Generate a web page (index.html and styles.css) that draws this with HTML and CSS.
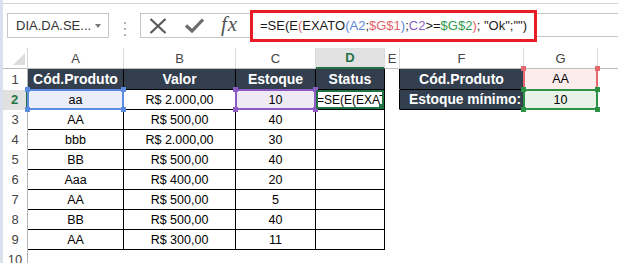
FILE: index.html
```html
<!DOCTYPE html>
<html lang="pt-BR">
<head>
    <meta charset="UTF-8">
    <title>Planilha - SE(E(EXATO))</title>
    <link rel="stylesheet" href="styles.css">
</head>
<body>
    <div class="window">
        <div class="top-rule"></div>

        <!-- Formula bar -->
        <div class="formula-bar">
            <div class="name-box"><span>DIA.DA.SE...</span><span class="caret"></span></div>
            <div class="grip"><i></i><i></i><i></i></div>
            <div class="fx-buttons">
                <svg class="icon-cancel" width="18" height="16" viewBox="0 0 18 16">
                    <path d="M1.5 1 L16.5 15 M16.5 1 L1.5 15" stroke="#595959" stroke-width="2.2" fill="none"/>
                </svg>
                <svg class="icon-enter" width="19" height="15" viewBox="0 0 19 15">
                    <path d="M1 7.5 L7 13 L18 1.5" stroke="#6b6b6b" stroke-width="3.2" fill="none"/>
                </svg>
                <span class="fx">fx</span>
            </div>
            <div class="formula-input">=SE(E<span class="f-red">(</span>EXATO<span class="f-blue">(A2</span>;<span class="f-red">$G$1</span><span class="f-blue">)</span>;<span class="f-purple">C2</span>&gt;=<span class="f-green">$G$2</span><span class="f-red">)</span>; "Ok";"")</div>
            <div class="formula-rest"></div>
        </div>

        <!-- Sheet -->
        <div class="sheet">
            <div class="c corner"></div>
            <div class="c ch">A</div>
            <div class="c ch">B</div>
            <div class="c ch">C</div>
            <div class="c ch ch-active">D</div>
            <div class="c ch">E</div>
            <div class="c ch">F</div>
            <div class="c ch">G</div>
            <div class="c ch"></div>

            <div class="c rh">1</div>
            <div class="c b dark">Cód.Produto</div>
            <div class="c b dark">Valor</div>
            <div class="c b dark">Estoque</div>
            <div class="c b dark">Status</div>
            <div class="c edge"></div>
            <div class="c b dark">Cód.Produto</div>
            <div class="c b fill-pink">AA<span class="sel sel-pink"><i class="tl"></i><i class="tr"></i></span></div>
            <div class="c"></div>

            <div class="c rh rh-active">2</div>
            <div class="c b fill-blue">aa<span class="sel sel-blue"><i class="tl"></i><i class="tr"></i><i class="bl"></i><i class="br"></i></span></div>
            <div class="c b">R$ 2.000,00</div>
            <div class="c b fill-purple">10<span class="sel sel-purple"><i class="tl"></i><i class="tr"></i><i class="bl"></i><i class="br"></i></span></div>
            <div class="c b editing"><span class="edit-text">=SE(E(EXAT</span><span class="sel sel-active"><i class="br"></i></span></div>
            <div class="c edge"></div>
            <div class="c b dark label">Estoque mínimo:</div>
            <div class="c b fill-green">10<span class="sel sel-green"><i class="tl"></i><i class="tr"></i><i class="bl"></i><i class="br"></i></span></div>
            <div class="c"></div>

            <div class="c rh">3</div>
            <div class="c b">AA</div>
            <div class="c b">R$ 500,00</div>
            <div class="c b">40</div>
            <div class="c b"></div>
            <div class="c"></div><div class="c"></div><div class="c"></div><div class="c"></div>

            <div class="c rh">4</div>
            <div class="c b">bbb</div>
            <div class="c b">R$ 2.000,00</div>
            <div class="c b">30</div>
            <div class="c b"></div>
            <div class="c"></div><div class="c"></div><div class="c"></div><div class="c"></div>

            <div class="c rh">5</div>
            <div class="c b">BB</div>
            <div class="c b">R$ 500,00</div>
            <div class="c b">40</div>
            <div class="c b"></div>
            <div class="c"></div><div class="c"></div><div class="c"></div><div class="c"></div>

            <div class="c rh">6</div>
            <div class="c b">Aaa</div>
            <div class="c b">R$ 400,00</div>
            <div class="c b">20</div>
            <div class="c b"></div>
            <div class="c"></div><div class="c"></div><div class="c"></div><div class="c"></div>

            <div class="c rh">7</div>
            <div class="c b">AA</div>
            <div class="c b">R$ 500,00</div>
            <div class="c b">5</div>
            <div class="c b"></div>
            <div class="c"></div><div class="c"></div><div class="c"></div><div class="c"></div>

            <div class="c rh">8</div>
            <div class="c b">BB</div>
            <div class="c b">R$ 500,00</div>
            <div class="c b">40</div>
            <div class="c b"></div>
            <div class="c"></div><div class="c"></div><div class="c"></div><div class="c"></div>

            <div class="c rh">9</div>
            <div class="c b">AA</div>
            <div class="c b">R$ 300,00</div>
            <div class="c b">11</div>
            <div class="c b"></div>
            <div class="c"></div><div class="c"></div><div class="c"></div><div class="c"></div>

            <div class="c rh">10</div>
            <div class="c"></div><div class="c"></div><div class="c"></div><div class="c"></div>
            <div class="c"></div><div class="c"></div><div class="c"></div><div class="c"></div>
        </div>
    </div>
</body>
</html>
```

FILE: styles.css
```css
* {
    box-sizing: border-box;
}

body {
    margin: 0;
    background-color: #fff;
    font-family: "Liberation Sans", Arial, sans-serif;
    color: #000;
    overflow: hidden;
}

.window {
    height: 263px;
    border-left: 3px solid #d9e2ec;
    overflow: hidden;
}

.top-rule {
    height: 4px;
    border-bottom: 1px solid #d5d5d5;
}

/* Formula bar */
.formula-bar {
    display: flex;
    align-items: flex-start;
    height: 44px;
    padding-left: 4px;
}

.name-box {
    display: flex;
    align-items: center;
    justify-content: space-between;
    width: 102px;
    height: 25px;
    margin-top: 9px;
    padding: 0 7px 0 8px;
    border: 1px solid #c6c6c6;
    font-size: 13px;
    color: #333;
}

.caret {
    width: 0;
    height: 0;
    border-left: 3.5px solid transparent;
    border-right: 3.5px solid transparent;
    border-top: 4px solid #7a7a7a;
}

.grip {
    display: flex;
    flex-direction: column;
    gap: 4px;
    margin: 18px 0 0 15px;
}

.grip i {
    display: block;
    width: 2px;
    height: 2px;
    background-color: #b3b3b3;
}

.fx-buttons {
    display: flex;
    align-items: center;
    width: 110px;
    height: 25px;
    margin: 9px 0 0 14px;
    padding-left: 8px;
    border: 1px solid #c6c6c6;
    border-right: none;
}

.icon-enter {
    margin-left: 18px;
}

.fx {
    margin-left: 17px;
    margin-top: -2px;
    font-family: "Liberation Serif", "Times New Roman", serif;
    font-style: italic;
    font-size: 21px;
    letter-spacing: 1px;
    line-height: 1;
    color: #555;
}

.formula-input {
    width: 287px;
    height: 32px;
    margin-top: 6px;
    padding-left: 7px;
    border: 3px solid #e81c24;
    font-size: 13px;
    line-height: 26px;
    white-space: nowrap;
    color: #1a1a1a;
}

.f-red { color: #e2636a; }
.f-blue { color: #5a86d6; }
.f-purple { color: #8b5cc2; }
.f-green { color: #2f9a4b; }

.formula-rest {
    flex: 1;
    height: 24px;
    margin-top: 9px;
    border-top: 1px solid #c6c6c6;
    border-bottom: 1px solid #c6c6c6;
}

/* Sheet grid */
.sheet {
    display: grid;
    grid-template-columns: 25px 96px 112px 80px 69px 15px 124px 74px 40px;
    grid-template-rows: 21px 21px repeat(9, 20px);
    width: 635px;
}

.c {
    position: relative;
    display: flex;
    align-items: center;
    justify-content: center;
    border-right: 1px solid transparent;
    border-bottom: 1px solid transparent;
    font-size: 12.5px;
    white-space: nowrap;
}

.corner {
    align-items: flex-end;
    justify-content: flex-end;
    padding: 0 2px 3px 0;
    border-right-color: #d4d4d4;
    border-bottom-color: #bdbdbd;
}

.corner::after {
    content: "";
    width: 0;
    height: 0;
    border-left: 12px solid transparent;
    border-bottom: 12px solid #dcdcdc;
}

.ch {
    color: #444;
    font-size: 13px;
    border-right-color: #dadada;
    border-bottom-color: #bdbdbd;
}

.ch-active {
    background-color: #e1e1e1;
    color: #217346;
    font-weight: bold;
    border-bottom: 2px solid #217346;
}

.rh {
    color: #444;
    font-size: 13px;
    border-right-color: #b5b5b5;
}

.rh-active {
    background-color: #e1e1e1;
    color: #217346;
    font-weight: bold;
    border-right: 2px solid #217346;
}

.b {
    border-right-color: #000;
    border-bottom-color: #000;
}

.edge {
    border-right-color: #000;
}

.dark {
    background-color: #333f4f;
    color: #fff;
    font-weight: bold;
    font-size: 14px;
}

.dark.label {
    justify-content: flex-end;
    padding-right: 2px;
    font-size: 13.8px;
}

.fill-blue { background-color: #e9eef9; }
.fill-purple { background-color: #efe9f6; }
.fill-pink { background-color: #fdecec; }
.fill-green { background-color: #e8f2e6; }

.editing {
    justify-content: flex-start;
    overflow: hidden;
}

.edit-text {
    padding-left: 1px;
    font-size: 12px;
}

/* Range highlights drawn over the grid */
.sel {
    position: absolute;
    left: -1px;
    top: -1px;
    right: -1px;
    bottom: -1px;
    border: 2px solid;
    z-index: 2;
}

.editing .sel {
    left: 0;
    top: 0;
    right: 0;
    bottom: 0;
}

.sel i {
    position: absolute;
    width: 5px;
    height: 5px;
    background-color: currentColor;
}

.sel .tl { left: -4px; top: -4px; }
.sel .tr { right: -4px; top: -4px; }
.sel .bl { left: -4px; bottom: -4px; }
.sel .br { right: -4px; bottom: -4px; }

.editing .sel .br { right: -2px; bottom: -2px; }

.sel-blue { color: #5b8ce0; border-color: #5b8ce0; }
.sel-purple { color: #8c5cc4; border-color: #8c5cc4; }
.sel-green { color: #2e9244; border-color: #2e9244; }
.sel-active { color: #217346; border-color: #217346; }

.sel-pink {
    color: #e5676e;
    border-color: #e5676e;
    border-top: none;
    border-bottom: none;
}

.sel-pink .tl,
.sel-pink .tr {
    top: -2px;
}
```
